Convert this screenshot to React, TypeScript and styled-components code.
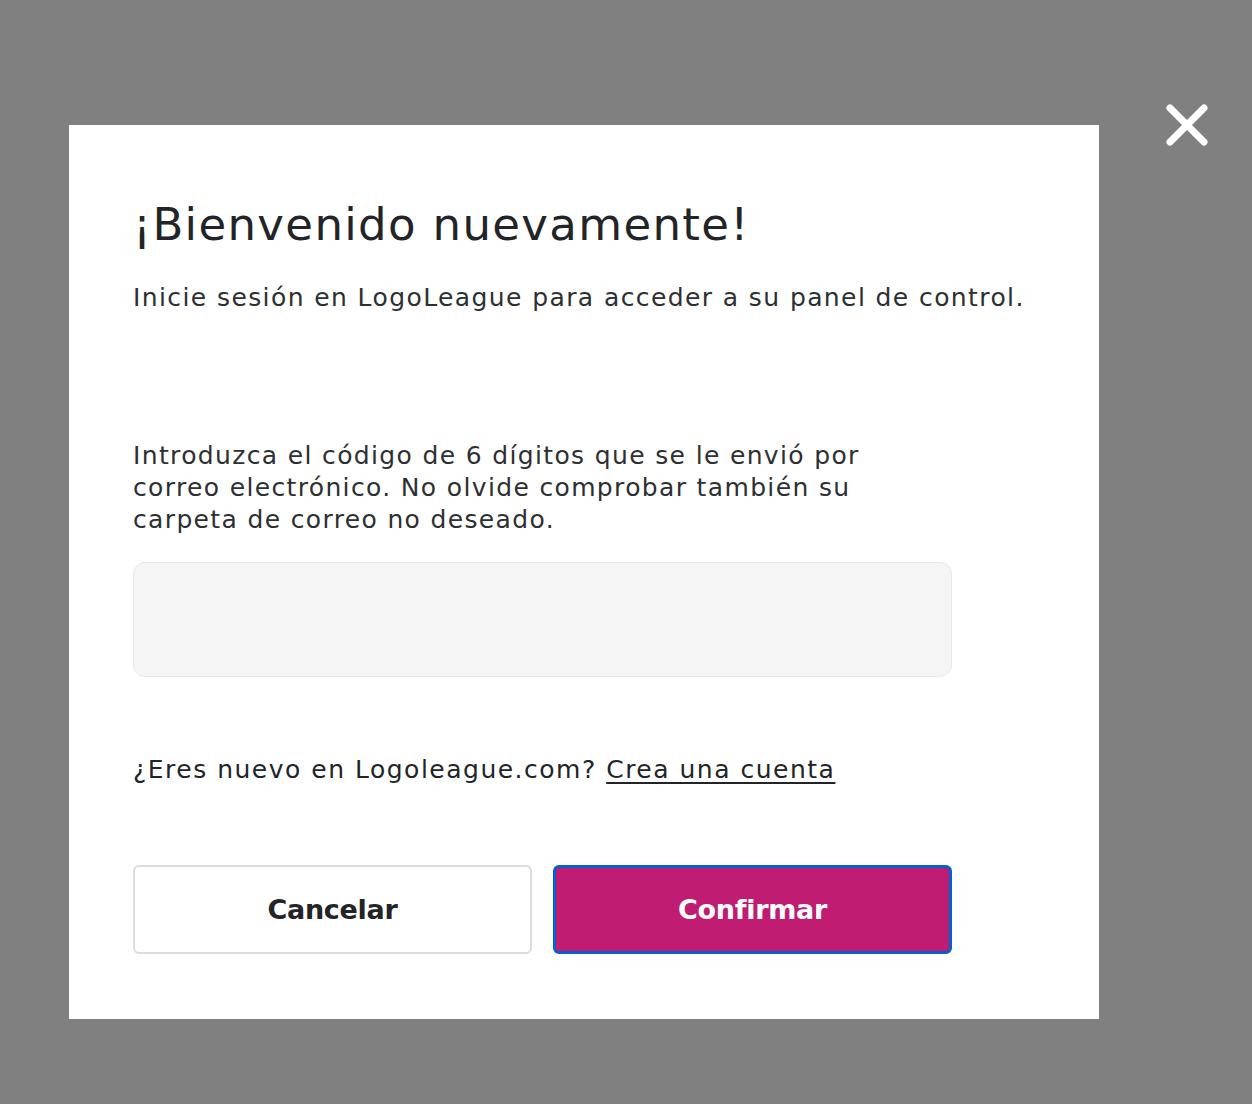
import React from "react";
import styled, { createGlobalStyle } from "styled-components";

const Global = createGlobalStyle`
  html, body { margin: 0; padding: 0; }
  body { background: #808080; font-family: "DejaVu Sans", sans-serif; }
`;

const Overlay = styled.div`
  position: relative;
  width: 1252px;
  height: 1104px;
  background: #808080;
  box-sizing: border-box;
  padding: 125px 0 0 69px;
`;

const CloseButton = styled.button`
  position: absolute;
  left: 1162px;
  top: 100px;
  width: 50px;
  height: 50px;
  padding: 0;
  border: none;
  background: transparent;
  cursor: pointer;
`;

const Modal = styled.div`
  width: 1030px;
  height: 894px;
  background: #ffffff;
  box-sizing: border-box;
  padding: 72px 64px 0 64px;
  display: flex;
  flex-direction: column;
`;

const Title = styled.h1`
  margin: 0;
  font-size: 45px;
  font-weight: 400;
  color: #222428;
  line-height: 56px;
  letter-spacing: 1.35px;
  white-space: nowrap;
`;

const Subtitle = styled.p`
  margin: 29px 0 0 0;
  font-size: 25px;
  font-weight: 400;
  color: #2d2f33;
  line-height: 32px;
  letter-spacing: 1.4px;
  white-space: nowrap;
`;

const Instructions = styled.p`
  margin: 126px 0 0 0;
  font-size: 25px;
  font-weight: 400;
  color: #2d2f33;
  line-height: 32px;
  letter-spacing: 1.35px;
  white-space: nowrap;
`;

const CodeInput = styled.input`
  margin-top: 26px;
  width: 819px;
  height: 115px;
  box-sizing: border-box;
  background: #f5f5f5;
  border: 1px solid #e8e8e8;
  border-radius: 12px;
  font-size: 28px;
  padding: 0 24px;
  outline: none;
`;

const SignupLine = styled.p`
  margin: 77px 0 0 0;
  font-size: 25px;
  color: #222428;
  line-height: 32px;
  letter-spacing: 1.5px;
  white-space: nowrap;
`;

const Link = styled.a`
  color: #222428;
  text-decoration: underline;
  text-underline-offset: 4px;
  text-decoration-thickness: 2px;
`;

const Actions = styled.div`
  margin-top: 79px;
  display: flex;
  gap: 21px;
`;

const Button = styled.button<{ $primary?: boolean }>`
  width: 399px;
  height: 89px;
  box-sizing: border-box;
  border-radius: 6px;
  font-family: "DejaVu Sans", sans-serif;
  font-size: 27px;
  font-weight: 700;
  letter-spacing: -0.3px;
  cursor: pointer;
  background: ${(p) => (p.$primary ? "#c01c71" : "#ffffff")};
  color: ${(p) => (p.$primary ? "#ffffff" : "#222428")};
  border: ${(p) => (p.$primary ? "3px solid #0a5fd0" : "2px solid #dcdcdc")};
`;

export default function App() {
  return (
    <>
      <Global />
      <Overlay>
        <Modal>
          <Title>¡Bienvenido nuevamente!</Title>
          <Subtitle>Inicie sesión en LogoLeague para acceder a su panel de control.</Subtitle>
          <Instructions>
            Introduzca el código de 6 dígitos que se le envió por
            <br />
            correo electrónico. No olvide comprobar también su
            <br />
            carpeta de correo no deseado.
          </Instructions>
          <CodeInput type="text" aria-label="Código" />
          <SignupLine>
            ¿Eres nuevo en Logoleague.com? <Link href="#">Crea una cuenta</Link>
          </SignupLine>
          <Actions>
            <Button>Cancelar</Button>
            <Button $primary>Confirmar</Button>
          </Actions>
        </Modal>
        <CloseButton aria-label="Cerrar">
          <svg width="50" height="50" viewBox="0 0 50 50">
            <path d="M8 8 L42 42 M42 8 L8 42" stroke="#ffffff" strokeWidth="7" strokeLinecap="round" />
          </svg>
        </CloseButton>
      </Overlay>
    </>
  );
}
